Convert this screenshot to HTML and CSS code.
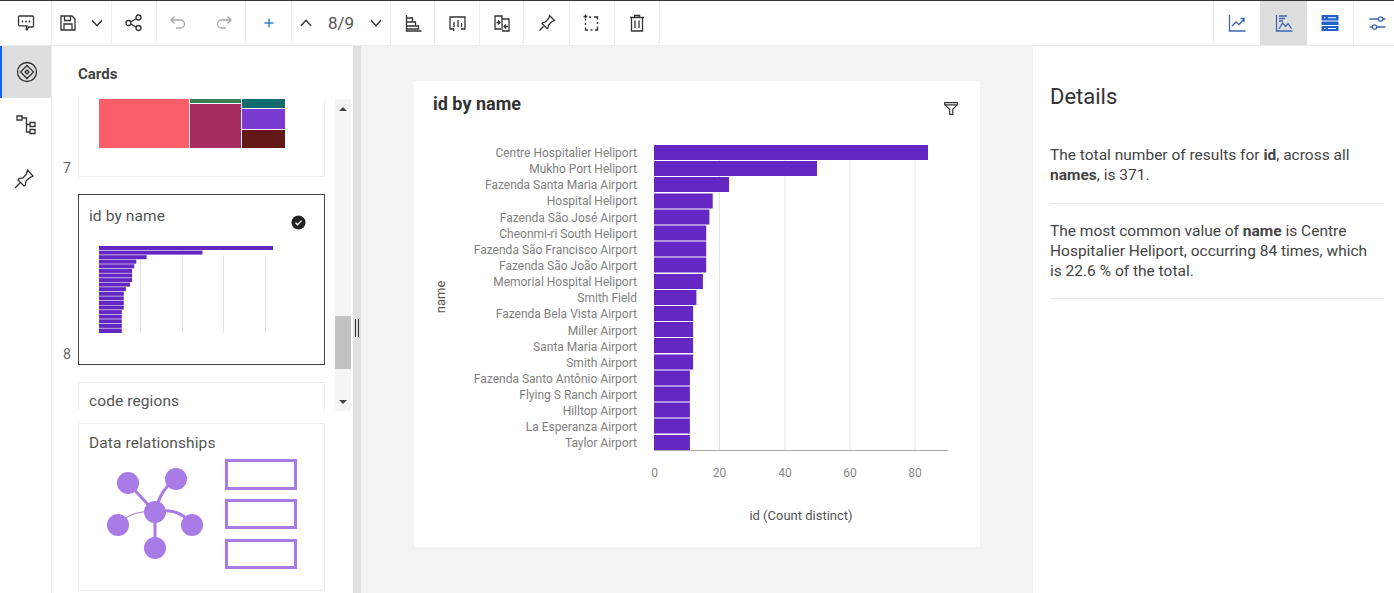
FILE: index.html
```html
<!DOCTYPE html>
<html lang="en">
<head>
<meta charset="UTF-8">
<meta name="viewport" content="width=device-width, initial-scale=1.0">
<title>Dashboard editor</title>
<link rel="stylesheet" href="styles.css">
</head>
<body>

<div class="toolbar">
    <div class="tool-group w52"><svg class="icon" viewBox="0 0 20 20"><path d="M3.500 3h13a1 1 0 0 1 1 1v9a1 1 0 0 1-1 1h-4l-1.500 3-1-1 1-3.200h-7.500a1 1 0 0 1-1-1V4a1 1 0 0 1 1-1z"/><circle class="dot" cx="6.500" cy="8.500" r=".9"/><circle class="dot" cx="10" cy="8.500" r=".9"/><circle class="dot" cx="13.500" cy="8.500" r=".9"/></svg></div>
    <div class="tool-group w60">
        <svg class="icon" viewBox="0 0 20 20"><path d="M3 3h11l3 3v11H3zM6.500 3v4.500h6V3M6 17v-6h8v6"/></svg>
        <svg class="icon chevron" viewBox="0 0 20 20"><path d="M4.500 7l5.500 6 5.500-6"/></svg>
    </div>
    <div class="tool-group w45"><svg class="icon" viewBox="0 0 20 20"><circle cx="4.500" cy="10" r="2.500"/><circle cx="14.500" cy="4.500" r="2.500"/><circle cx="14.500" cy="15" r="2.500"/><path d="M6.700 8.800l5.600-3M6.700 11.200l5.600 2.800"/></svg></div>
    <div class="tool-group w89 spread">
        <svg class="icon muted" viewBox="0 0 20 20"><path d="M6.500 3.500L3 7l3.500 3.500M3 7h9.500a4 4 0 0 1 0 8H8"/></svg>
        <svg class="icon muted" viewBox="0 0 20 20"><path d="M13.500 3.500L17 7l-3.500 3.500M17 7H7.500a4 4 0 0 0 0 8H12"/></svg>
    </div>
    <div class="tool-group w46"><svg class="icon accent" viewBox="0 0 20 20"><path d="M10 5v10M5 10h10"/></svg></div>
    <div class="tool-group w99 pager">
        <svg class="icon chevron" viewBox="0 0 20 20"><path d="M4.500 13l5.500-6 5.500 6"/></svg>
        <span class="page-count">8/9</span>
        <svg class="icon chevron" viewBox="0 0 20 20"><path d="M4.500 7l5.500 6 5.500-6"/></svg>
    </div>
    <div class="tool-group w44"><svg class="icon" viewBox="0 0 20 20"><path d="M3.500 2v16h15M3.500 5h6v4h-6M3.500 9h9v4h-9M3.500 13h12v3h-12"/></svg></div>
    <div class="tool-group w45"><svg class="icon" viewBox="0 0 20 20"><path d="M7 16H3V4h15v12h-4M7 9v5M11 7v7M14.500 10v4M7 16l-.500 2"/></svg></div>
    <div class="tool-group w44"><svg class="icon" viewBox="0 0 20 20"><path d="M9 16H3V3h7v14M10 6h7v12h-7M4.500 9.500h3M6 7.500l2 2-2 2M16 13.500h-4M14 11.500l-2 2 2 2"/></svg></div>
    <div class="tool-group w46"><svg class="icon" viewBox="0 0 20 20"><path d="M12.500 2.500l5 5-2.500 1-3.500 3.500-.5 3-1 .5-5-5 .5-1 3-.5L12 5zM6.500 13.500L2.500 17.500"/></svg></div>
    <div class="tool-group w45"><svg class="icon" viewBox="0 0 20 20"><path d="M7 4h2M12 4h3.500v2.500M15.500 9v2M15.500 13.500V17H13M10.500 17h-2M6 17H3.500v-2.500M3.500 12v-2M3.500 7.500V6M1.500 3.500h4M3.500 1.500v4"/></svg></div>
    <div class="tool-group w45"><svg class="icon" viewBox="0 0 20 20"><path d="M3 4.500h14M7.500 4.500V2.500h5v2M4.500 4.500V18h11V4.500M8 7.500v7.500M12 7.500v7.500"/></svg></div>
    <div class="toolbar-spacer"></div>
    <div class="tool-group w47 first-right"><svg class="icon blue" viewBox="0 0 20 20"><path d="M2.500 2v16h16M5 13l4-4 3 2.500 5-5.500M13.500 5.500H17V9"/></svg></div>
    <div class="tool-group w47 is-active"><svg class="icon blue" viewBox="0 0 20 20"><path d="M2.500 2v16h16M5 16l3.500-6 3 3.500 2.500-3 3.500 5M5 3h8M5 5.500h6M5 8h4"/></svg></div>
    <div class="tool-group w47 no-line"><svg class="solid-icon" viewBox="0 0 20 20"><rect x="1.500" y="2" width="17" height="5.500" rx=".5"/><rect x="1.500" y="8.500" width="17" height="3.500" rx=".5"/><rect x="1.500" y="13" width="17" height="5" rx=".5"/><path class="cut" d="M4 4.700h1.500M8 4.700h8M4 15.500h1.500M8 15.500h8"/></svg></div>
    <div class="tool-group w40"><svg class="icon blue" viewBox="0 0 20 20"><path d="M1.500 6h16M1.500 14h16"/><circle class="fill-white" cx="12.500" cy="6" r="2.200"/><circle class="fill-white" cx="6.500" cy="14" r="2.200"/></svg></div>
</div>

<div class="workspace">
    <nav class="rail">
        <div class="rail-item is-active"><svg class="rail-icon" viewBox="0 0 24 24"><circle cx="12" cy="12" r="9.500"/><path d="M12 5.500l6.500 6.500-6.500 6.500L5.500 12zM12 10l2 2-2 2-2-2z"/></svg></div>
        <div class="rail-item"><svg class="rail-icon" viewBox="0 0 24 24"><path d="M3 3h5v4H3zM16 9.500h5v4h-5zM16 16.500h5v4h-5zM8 5h4.500v14H16M12.500 11.500H16"/></svg></div>
        <div class="rail-item"><svg class="rail-icon pin" viewBox="0 0 24 24"><path d="M15.500 3L21 9l-3 1.500-4 3.500-.5 4-1.500 1-6-6 1-1.500 4-.5 3.500-4zM8.500 15.500L3 21"/></svg></div>
    </nav>

    <aside class="cards-panel">
        <h3 class="cards-title">Cards</h3>
        <div class="card-scroller">
            <div class="card-list">
                <div class="card-row">
                    <span class="card-number low">7</span>
                    <div class="card card-top">
                        <div class="treemap">
                            <div class="tm-red"></div>
                            <div class="tm-column tm-mid">
                                <div class="tm-green"></div>
                                <div class="tm-maroon"></div>
                            </div>
                            <div class="tm-column tm-right">
                                <div class="tm-teal"></div>
                                <div class="tm-purple"></div>
                                <div class="tm-dark"></div>
                            </div>
                        </div>
                    </div>
                </div>
                <div class="card-row">
                    <span class="card-number">8</span>
                    <div class="card card-selected">
                        <div class="card-head">
                            <span class="card-name">id by name</span>
                            <svg class="check" viewBox="0 0 16 16"><circle cx="8" cy="8" r="7.500"/><path d="M4.800 8.200l2.200 2.200 4.200-4.400"/></svg>
                        </div>
                        <svg class="mini-chart" viewBox="99 246 186 88">
                            <g class="grid"><path d="M140.500 255v78M182.500 255v78M223.500 255v78M265.500 255v78"/></g>
                            <g class="bar">
                                <rect x="99" y="246" width="174" height="4"/><rect x="99" y="250.600" width="103.500" height="4"/>
                                <rect x="99" y="255.200" width="47.600" height="4"/><rect x="99" y="259.700" width="37.300" height="4"/>
                                <rect x="99" y="264.300" width="35.200" height="4"/><rect x="99" y="268.900" width="33.100" height="4"/>
                                <rect x="99" y="273.500" width="33.100" height="4"/><rect x="99" y="278.100" width="33.100" height="4"/>
                                <rect x="99" y="282.600" width="31" height="4"/><rect x="99" y="287.200" width="26.900" height="4"/>
                                <rect x="99" y="291.800" width="24.800" height="4"/><rect x="99" y="296.400" width="24.800" height="4"/>
                                <rect x="99" y="301" width="24.800" height="4"/><rect x="99" y="305.500" width="24.800" height="4"/>
                                <rect x="99" y="310.100" width="22.800" height="4"/><rect x="99" y="314.700" width="22.800" height="4"/>
                                <rect x="99" y="319.300" width="22.800" height="4"/><rect x="99" y="323.900" width="22.800" height="4"/>
                                <rect x="99" y="328.500" width="22.800" height="4.500"/>
                            </g>
                        </svg>
                    </div>
                </div>
                <div class="card-row">
                    <span class="card-number"></span>
                    <div class="card card-cut"><span class="card-name">code regions</span></div>
                </div>
            </div>
            <div class="scrollbar">
                <div class="scroll-arrow up"></div>
                <div class="scroll-track"><div class="scroll-thumb"></div></div>
                <div class="scroll-arrow down"></div>
            </div>
        </div>
        <div class="card card-relations">
            <span class="card-name">Data relationships</span>
            <svg class="relations" viewBox="100 455 200 118">
                <path class="link" d="M128 483l27 29M176 479c-12 8-17 18-21 33M155 512c14-3 28 0 37 13M155 512v36"/>
                <path class="link thin" d="M118 525c8-10 22-15 37-13"/>
                <circle class="node" cx="128" cy="483" r="11"/><circle class="node" cx="176" cy="479" r="11"/>
                <circle class="node" cx="155" cy="512" r="11"/><circle class="node" cx="118" cy="525" r="11"/>
                <circle class="node" cx="192" cy="525" r="11"/><circle class="node" cx="155" cy="548" r="11"/>
                <rect class="box" x="226.500" y="460.500" width="69" height="28"/>
                <rect class="box" x="226.500" y="500.500" width="69" height="27"/>
                <rect class="box" x="226.500" y="540.500" width="69" height="27"/>
            </svg>
        </div>
    </aside>

    <div class="splitter"><span class="grip"></span></div>

    <main class="canvas">
        <section class="chart-card">
            <div class="chart-head">
                <h2>id by name</h2>
                <svg class="icon filter" viewBox="0 0 20 20"><path d="M3 4h14v2.500l-5 5V17H8.500v-5.500l-5.500-5zM3 6.500h14"/></svg>
            </div>
            <svg class="chart" viewBox="414 127 566 420">
                <g class="grid"><path d="M719.500 145v305M785 145v305M850 145v305M915 145v305"/></g>
                <g class="bar">
                    <rect x="654" y="145" width="274" height="15"/><rect x="654" y="161" width="163" height="15"/>
                    <rect x="654" y="177" width="75" height="15"/><rect x="654" y="193.500" width="58.700" height="15"/>
                    <rect x="654" y="209.500" width="55.400" height="15"/><rect x="654" y="225.500" width="52.200" height="15"/>
                    <rect x="654" y="241.500" width="52.200" height="15"/><rect x="654" y="257.500" width="52.200" height="15"/>
                    <rect x="654" y="274" width="48.900" height="15"/><rect x="654" y="290" width="42.400" height="15"/>
                    <rect x="654" y="306" width="39.100" height="15"/><rect x="654" y="322" width="39.100" height="15"/>
                    <rect x="654" y="338" width="39.100" height="15"/><rect x="654" y="354.500" width="39.100" height="15"/>
                    <rect x="654" y="370.500" width="35.900" height="15"/><rect x="654" y="386.500" width="35.900" height="15"/>
                    <rect x="654" y="402.500" width="35.900" height="15"/><rect x="654" y="418.500" width="35.900" height="15"/>
                    <rect x="654" y="435" width="35.900" height="15"/>
                </g>
                <path class="axis" d="M654 450.500h294"/>
                <g class="labels">
                    <text x="637" y="157">Centre Hospitalier Heliport</text>
                    <text x="637" y="173">Mukho Port Heliport</text>
                    <text x="637" y="189">Fazenda Santa Maria Airport</text>
                    <text x="637" y="205">Hospital Heliport</text>
                    <text x="637" y="221.500">Fazenda São José Airport</text>
                    <text x="637" y="238">Cheonmi-ri South Heliport</text>
                    <text x="637" y="254">Fazenda São Francisco Airport</text>
                    <text x="637" y="270">Fazenda São João Airport</text>
                    <text x="637" y="286">Memorial Hospital Heliport</text>
                    <text x="637" y="302">Smith Field</text>
                    <text x="637" y="318">Fazenda Bela Vista Airport</text>
                    <text x="637" y="334.500">Miller Airport</text>
                    <text x="637" y="350.500">Santa Maria Airport</text>
                    <text x="637" y="366.500">Smith Airport</text>
                    <text x="637" y="383">Fazenda Santo Antônio Airport</text>
                    <text x="637" y="398.500">Flying S Ranch Airport</text>
                    <text x="637" y="414.500">Hilltop Airport</text>
                    <text x="637" y="430.500">La Esperanza Airport</text>
                    <text x="637" y="447">Taylor Airport</text>
                </g>
                <g class="ticks">
                    <text x="654.500" y="477">0</text>
                    <text x="719.500" y="477">20</text>
                    <text x="785" y="477">40</text>
                    <text x="850" y="477">60</text>
                    <text x="915" y="477">80</text>
                </g>
                <text class="axis-title" x="801" y="520">id (Count distinct)</text>
                <text class="axis-title" transform="translate(445 297) rotate(-90)">name</text>
            </svg>
        </section>
    </main>

    <aside class="details">
        <h2>Details</h2>
        <p class="insight">The total number of results for <b>id</b>, across all <b>names</b>, is 371.</p>
        <p class="insight">The most common value of <b>name</b> is Centre Hospitalier Heliport, occurring 84 times, which is 22.6 % of the total.</p>
    </aside>
</div>

</body>
</html>
```

FILE: styles.css
```css
* {
    box-sizing: border-box;
}
html, body {
    height: 100%;
}
body {
    font-family: Roboto, "Noto Sans", Arial, sans-serif;
    background-color: #fff;
    color: #333;
    margin: 0;
    overflow: hidden;
}

/* top bar */
.toolbar {
    display: flex;
    height: 46px;
    border-top: 1px solid #333;
    border-bottom: 1px solid #ececec;
}
.tool-group {
    display: flex;
    align-items: center;
    justify-content: center;
    gap: 10px;
    height: 44px;
    border-right: 1px solid #efefef;
}
.w40 { width: 40px; padding-left: 8px; border-right: none; }
.w44 { width: 44px; }
.w45 { width: 45px; }
.w46 { width: 46px; }
.w47 { width: 47px; }
.w52 { width: 52px; }
.w60 { width: 60px; }
.w89 { width: 89px; }
.w99 { width: 99px; }
.spread {
    gap: 26px;
}
.pager {
    justify-content: space-between;
    padding: 0 5px;
}
.page-count {
    font-size: 17px;
    color: #555;
}
.toolbar-spacer {
    flex: 1;
}
.first-right {
    border-left: 1px solid #efefef;
    border-right: none;
}
.no-line {
    border-right: 1px solid #efefef;
}
.tool-group.is-active {
    background-color: #dedede;
    border-right: none;
}
.icon {
    width: 20px;
    height: 20px;
    fill: none;
    stroke: #333;
    stroke-width: 1.300;
}
.icon.chevron {
    width: 18px;
    height: 18px;
    stroke-width: 1.600;
}
.icon.muted {
    stroke: #a8a8a8;
}
.icon.accent {
    stroke: #2f7fd0;
    stroke-width: 1.600;
    width: 18px;
    height: 18px;
}
.icon.blue {
    stroke: #3d68b4;
}
.fill-white {
    fill: #fff;
}
.dot {
    fill: #333;
    stroke: none;
}
.solid-icon {
    width: 20px;
    height: 20px;
    fill: #1f62c8;
}
.solid-icon .cut {
    fill: none;
    stroke: #fff;
    stroke-width: 1.100;
}

/* main row */
.workspace {
    display: flex;
    height: 547px;
}
.rail {
    width: 52px;
    border-right: 1px solid #efefef;
    flex-shrink: 0;
}
.rail-item {
    display: flex;
    align-items: center;
    justify-content: center;
    height: 53px;
}
.rail-item.is-active {
    height: 52px;
    background-color: #dedede;
    border-left: 2px solid #0f62fe;
}
.rail-icon {
    width: 24px;
    height: 24px;
    fill: none;
    stroke: #333;
    stroke-width: 1.300;
}
.rail-icon.pin {
    margin: 2px 4px 0 0;
}

/* cards panel */
.cards-panel {
    width: 301px;
    flex-shrink: 0;
}
.cards-title {
    font-size: 15px;
    font-weight: 700;
    color: #444;
    margin: 0;
    padding: 19px 0 0 26px;
    height: 53px;
}
.card-scroller {
    display: flex;
    height: 312px;
    overflow: hidden;
}
.card-list {
    width: 283px;
}
.card-row {
    display: flex;
    align-items: flex-end;
    margin-bottom: 17px;
}
.card-row:last-child {
    margin-bottom: 0;
}
.card-number {
    width: 26px;
    padding: 0 0 3px 11px;
    font-size: 14px;
    color: #666;
}
.card-number.low {
    padding-bottom: 1px;
}
.card {
    width: 247px;
    border: 1px solid #efefef;
    background-color: #fff;
}
.card-top {
    height: 78px;
    border-top: none;
    padding-left: 20px;
}
.treemap {
    display: flex;
    gap: 1px;
    width: 186px;
    height: 49px;
}
.tm-red { width: 90px; background-color: #fa5f69; }
.tm-column { display: flex; flex-direction: column; gap: 1px; }
.tm-mid { width: 51px; }
.tm-right { width: 43px; }
.tm-green { height: 4px; background-color: #3d7a57; }
.tm-maroon { flex: 1; background-color: #a52c5e; }
.tm-teal { height: 9px; background-color: #136b70; }
.tm-purple { height: 20px; background-color: #7a3bd0; }
.tm-dark { flex: 1; background-color: #641818; }
.card-selected {
    height: 171px;
    border: 1px solid #444;
    padding: 12px 20px 0 20px;
}
.card-head {
    display: flex;
    justify-content: space-between;
    align-items: flex-start;
    height: 39px;
    margin: 0 -2px 0 -10px;
}
.card-name {
    font-size: 15.500px;
    letter-spacing: .1px;
    color: #555;
}
.check {
    width: 15px;
    height: 15px;
    margin: 8px 0 0 0;
    fill: #222;
    stroke: none;
}
.check path {
    fill: none;
    stroke: #fff;
    stroke-width: 1.500;
}
.mini-chart {
    display: block;
    width: 186px;
    height: 88px;
}
.card-cut {
    height: 60px;
    padding: 8px 10px 0;
}
.card-relations {
    display: block;
    height: 168px;
    margin: 12px 0 0 26px;
    padding: 9px 10px 0;
}
.relations {
    display: block;
    width: 200px;
    height: 118px;
    margin: 3px 0 0 11px;
}
.relations .node { fill: #a87be6; }
.relations .link { fill: none; stroke: #a87be6; stroke-width: 3; }
.relations .link.thin { stroke-width: 1; }
.relations .box { fill: #fff; stroke: #a87be6; stroke-width: 3; }

/* scrollbar */
.scrollbar {
    display: flex;
    flex-direction: column;
    width: 16px;
    background-color: #f5f5f5;
}
.scroll-arrow {
    height: 19px;
    display: flex;
    align-items: center;
    justify-content: center;
}
.scroll-arrow::before {
    content: "";
    border-left: 4px solid transparent;
    border-right: 4px solid transparent;
}
.scroll-arrow.up::before {
    border-bottom: 4px solid #444;
}
.scroll-arrow.down::before {
    border-top: 4px solid #444;
}
.scroll-track {
    flex: 1;
    padding-top: 198px;
}
.scroll-thumb {
    height: 53px;
    background-color: #c1c1c1;
}

/* drag handle */
.splitter {
    display: flex;
    align-items: flex-start;
    width: 8px;
    flex-shrink: 0;
    background-color: #e0e0e0;
}
.grip {
    width: 4px;
    height: 18px;
    margin: 273px 0 0 2px;
    border-left: 1px solid #333;
    border-right: 1px solid #333;
}

/* chart */
.canvas {
    width: 672px;
    flex-shrink: 0;
    background-color: #f3f3f3;
    padding: 35px 53px;
}
.chart-card {
    width: 566px;
    height: 466px;
    background-color: #fff;
}
.chart-head {
    display: flex;
    justify-content: space-between;
    height: 46px;
    padding: 12px 19px 0;
}
.chart-head h2 {
    font-size: 18px;
    font-weight: 700;
    color: #333;
    margin: 0;
}
.filter {
    width: 18px;
    height: 18px;
    margin: 6px 1px 0 0;
}
.chart {
    display: block;
    width: 566px;
    height: 420px;
}
.grid path {
    fill: none;
    stroke: #e4e4e4;
}
.bar rect {
    fill: #6527c4;
}
.axis {
    fill: none;
    stroke: #aaa;
}
.labels text {
    font-size: 12px;
    fill: #808080;
    text-anchor: end;
}
.ticks text {
    font-size: 12px;
    fill: #888;
    text-anchor: middle;
}
.axis-title {
    font-size: 13px;
    fill: #555;
    text-anchor: middle;
}

/* details */
.details {
    flex: 1;
    padding: 38px 10px 0 17px;
}
.details h2 {
    font-size: 22px;
    font-weight: 400;
    color: #333;
    margin: 0 0 36px;
}
.insight {
    font-size: 15.500px;
    line-height: 20px;
    color: #444;
    margin: 0 0 17px;
    padding: 0 14px 18px 0;
    border-bottom: 1px solid #ececec;
}
.insight:last-child {
    padding-bottom: 17px;
}
```
